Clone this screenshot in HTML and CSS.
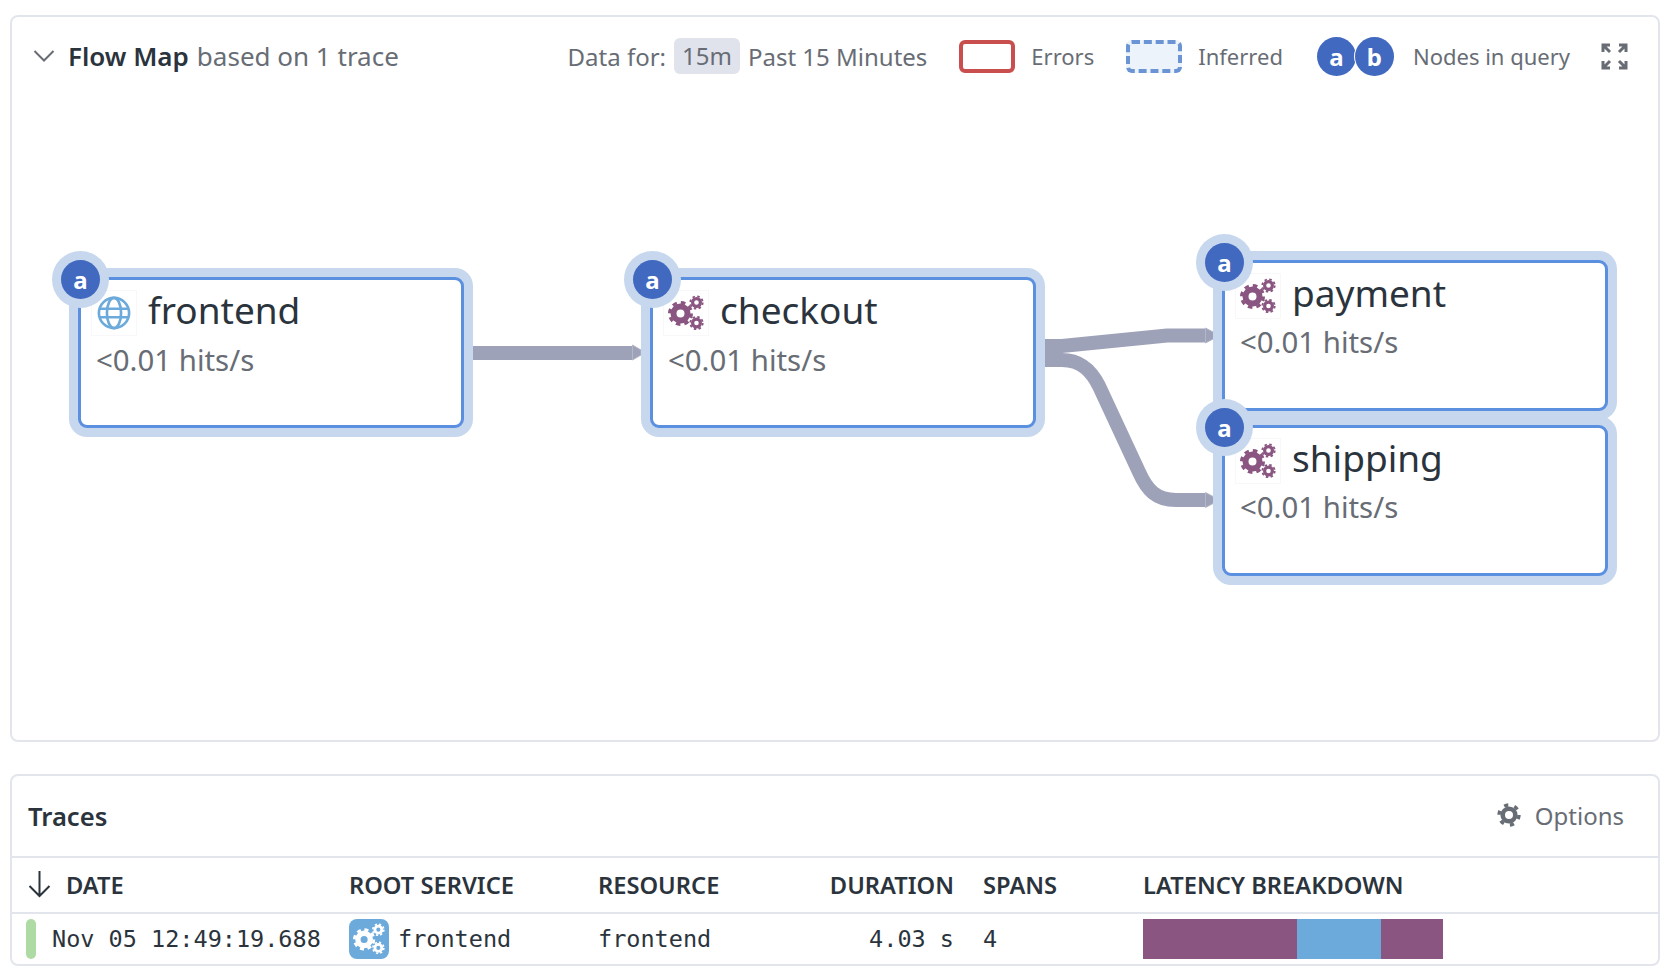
FILE: index.html
```html
<!DOCTYPE html>
<html lang="en">
<head>
    <meta charset="UTF-8">
    <title>Flow Map</title>
    <link rel="stylesheet" href="styles.css">
</head>
<body>
    <svg class="defs" width="0" height="0">
        <symbol id="gears" viewBox="0 0 36 36">
            <g fill="none" stroke="currentColor">
                <circle cx="12.500" cy="18.500" r="7" stroke-width="6"/>
                <circle cx="12.500" cy="18.500" r="11" stroke-width="3" stroke-dasharray="4.600 4.040"/>
                <circle cx="28.500" cy="7.500" r="3.900" stroke-width="3.200"/>
                <circle cx="28.500" cy="7.500" r="6.200" stroke-width="1.800" stroke-dasharray="2.500 2.370"/>
                <circle cx="28.500" cy="28" r="3.900" stroke-width="3.200"/>
                <circle cx="28.500" cy="28" r="6.200" stroke-width="1.800" stroke-dasharray="2.500 2.370"/>
            </g>
        </symbol>
    </svg>

    <!-- flow map -->
    <section class="panel flow-panel">
        <header class="flow-head">
            <div class="flow-title">
                <svg class="chevron" width="22" height="14" viewBox="0 0 22 14"><path d="M1.500 2 11 11.500 20.500 2" fill="none" stroke="#686d75" stroke-width="2"/></svg>
                <strong>Flow Map</strong>
                <span>based on 1 trace</span>
            </div>
            <div class="legend">
                <div class="legend-time">
                    <span>Data for:</span>
                    <span class="pill">15m</span>
                    <span>Past 15 Minutes</span>
                </div>
                <div class="legend-item"><i class="swatch swatch-error"></i>Errors</div>
                <div class="legend-item legend-inferred"><i class="swatch swatch-inferred"></i>Inferred</div>
                <div class="legend-item legend-nodes">
                    <span class="legend-badges"><b class="badge">a</b><b class="badge badge-b">b</b></span>
                    Nodes in query
                </div>
                <svg class="expand" width="27" height="27" viewBox="0 0 27 27">
                    <g fill="none" stroke="#686d75" stroke-width="3">
                        <path d="M2 9V2H9M2 2l7 7"/>
                        <path d="M25 9V2H18M25 2l-7 7"/>
                        <path d="M2 18v7H9M2 25l7-7"/>
                        <path d="M25 18v7H18M25 25l-7-7"/>
                    </g>
                </svg>
            </div>
        </header>

        <div class="graph">
            <!-- viewBox is in page coordinates, same offset as the graph box -->
            <svg class="edges" viewBox="12 97 1646 642" width="1646" height="642">
                <g fill="none" stroke="#9ea2b8" stroke-width="14">
                    <path d="M473 353H632"/>
                    <path d="M1045 346H1062L1167 335.500H1205"/>
                    <path d="M1045 360H1062C1082 360 1092 372 1099 386L1139 472C1147 490 1156 500 1176 500H1205"/>
                </g>
                <g fill="#9ea2b8" stroke="#b4b7c9" stroke-width="1">
                    <path d="M632.500 345 641 350V355L632.500 360Z"/>
                    <path d="M1205.500 328 1215 333V338L1205.500 343Z"/>
                    <path d="M1205.500 492.500 1215 497.500V502.500L1205.500 507.500Z"/>
                </g>
            </svg>

            <div class="node node-frontend">
                <b class="badge node-badge">a</b>
                <div class="node-head">
                    <span class="node-icon globe">
                        <svg width="34" height="34" viewBox="0 0 36 36" fill="none" stroke="currentColor" stroke-width="2.800">
                            <circle cx="18" cy="18" r="16"/>
                            <ellipse cx="18" cy="18" rx="7.500" ry="16"/>
                            <path d="M3 13.500H33M3 22.500H33"/>
                        </svg>
                    </span>
                    <span class="node-name">frontend</span>
                </div>
                <div class="node-hits">&lt;0.01 hits/s</div>
            </div>

            <div class="node node-checkout">
                <b class="badge node-badge">a</b>
                <div class="node-head">
                    <span class="node-icon"><svg width="36" height="36"><use href="#gears"/></svg></span>
                    <span class="node-name">checkout</span>
                </div>
                <div class="node-hits">&lt;0.01 hits/s</div>
            </div>

            <div class="node node-payment">
                <b class="badge node-badge">a</b>
                <div class="node-head">
                    <span class="node-icon"><svg width="36" height="36"><use href="#gears"/></svg></span>
                    <span class="node-name">payment</span>
                </div>
                <div class="node-hits">&lt;0.01 hits/s</div>
            </div>

            <div class="node node-shipping">
                <b class="badge node-badge">a</b>
                <div class="node-head">
                    <span class="node-icon"><svg width="36" height="36"><use href="#gears"/></svg></span>
                    <span class="node-name">shipping</span>
                </div>
                <div class="node-hits">&lt;0.01 hits/s</div>
            </div>
        </div>
    </section>

    <!-- traces table -->
    <section class="panel traces-panel">
        <header class="traces-head">
            <h2>Traces</h2>
            <div class="options">
                <svg width="24" height="24" viewBox="0 0 24 24" fill="none" stroke="#686d75">
                    <circle cx="12" cy="12" r="6.300" stroke-width="4.600"/>
                    <circle cx="12" cy="12" r="10" stroke-width="3.400" stroke-dasharray="4.200 6.270"/>
                </svg>
                Options
            </div>
        </header>
        <div class="row row-columns">
            <div class="cell cell-date">
                <svg width="23" height="27" viewBox="0 0 23 27"><path d="M11.500 0V25M1.500 15 11.500 25 21.500 15" fill="none" stroke="#2b343d" stroke-width="2"/></svg>
                DATE
            </div>
            <div class="cell">ROOT SERVICE</div>
            <div class="cell">RESOURCE</div>
            <div class="cell cell-right">DURATION</div>
            <div class="cell cell-spans">SPANS</div>
            <div class="cell">LATENCY BREAKDOWN</div>
        </div>
        <div class="row row-trace">
            <div class="cell cell-time"><i class="status"></i>Nov 05 12:49:19.688</div>
            <div class="cell cell-service">
                <span class="service-icon"><svg width="32" height="32"><use href="#gears"/></svg></span>
                frontend
            </div>
            <div class="cell">frontend</div>
            <div class="cell cell-right">4.03 s</div>
            <div class="cell cell-spans">4</div>
            <div class="cell latency">
                <i class="seg seg-purple" style="width: 154px"></i>
                <i class="seg seg-blue" style="width: 84px"></i>
                <i class="seg seg-purple" style="width: 62px"></i>
            </div>
        </div>
    </section>
</body>
</html>
```

FILE: styles.css
```css
* {
    box-sizing: border-box;
}

body {
    margin: 0;
    padding: 15px 14px 0 10px;
    background-color: #fff;
    font-family: "Noto Sans", sans-serif;
    color: #2b343d;
    overflow: hidden;
}

.defs {
    position: absolute;
}

.panel {
    border: 2px solid #e2e6ec;
    border-radius: 8px;
    background-color: #fff;
}

/* flow map */
.flow-panel {
    height: 727px;
}

.flow-head {
    display: flex;
    justify-content: space-between;
    align-items: center;
    height: 80px;
    padding: 0 30px 2px 21px;
}

.flow-title {
    display: flex;
    align-items: center;
    font-size: 26px;
    color: #686d75;
}

.flow-title strong {
    margin: 0 8px 0 13px;
    font-weight: 600;
    color: #2b343d;
}

.legend {
    display: flex;
    align-items: center;
    font-size: 22px;
    color: #686d75;
}

.legend-time {
    display: flex;
    align-items: center;
    gap: 8px;
    margin-right: 32px;
    font-size: 24px;
}

.pill {
    padding: 0 8px;
    line-height: 36px;
    border-radius: 6px;
    background-color: #e0e3ec;
}

.legend-item {
    display: flex;
    align-items: center;
    margin-right: 32px;
}

.legend-inferred {
    margin-right: 34px;
}

.legend-nodes {
    margin-right: 31px;
}

.swatch {
    width: 56px;
    height: 33px;
    margin-right: 16px;
    border-radius: 6px;
}

.swatch-error {
    border: 4px solid #c94f4f;
}

.swatch-inferred {
    border: 4px dashed #6a94d4;
    background-color: #edf3fb;
}

.legend-badges {
    display: flex;
    margin-right: 19px;
}

.badge {
    display: flex;
    align-items: center;
    justify-content: center;
    width: 39px;
    height: 39px;
    border-radius: 50%;
    background-color: #4169bf;
    color: #fff;
    font-size: 24px;
    font-weight: 700;
}

.badge-b {
    margin-left: -1px;
    box-shadow: -1px 0 0 #fff;
}

.expand {
    display: block;
}

/* graph */
.graph {
    position: relative;
    height: 642px;
}

.edges {
    position: absolute;
    left: 0;
    top: 0;
}

.node {
    position: absolute;
    width: 386px;
    height: 151px;
    padding: 11px;
    border: 3px solid #5b8fe0;
    border-radius: 9px;
    background-color: #fff;
    box-shadow: 0 0 0 9px #c6d7ee;
}

.node-frontend {
    left: 66px;
    top: 180px;
}

.node-checkout {
    left: 638px;
    top: 180px;
}

.node-payment {
    left: 1210px;
    top: 163px;
}

.node-shipping {
    left: 1210px;
    top: 328px;
}

.node-badge {
    position: absolute;
    left: -20px;
    top: -20px;
    box-shadow: 0 0 0 9px #c6d7ee;
}

.node-head {
    display: flex;
    align-items: center;
    gap: 12px;
    height: 44px;
}

.node-icon {
    display: flex;
    align-items: center;
    justify-content: center;
    width: 44px;
    height: 44px;
    color: #8a5580;
    box-shadow: 0 0 0 1px #f8f8fa;
}

.globe {
    color: #6caadb;
}

.node-name {
    padding-bottom: 6px;
    font-size: 37px;
    line-height: 38px;
}

.node-hits {
    margin: 5px 0 0 4px;
    font-size: 29.4px;
    line-height: 40px;
    color: #686d75;
}

.node-payment .node-hits,
.node-shipping .node-hits {
    margin-top: 4px;
}

/* traces */
.traces-panel {
    height: 192px;
    margin-top: 32px;
}

.traces-head {
    display: flex;
    justify-content: space-between;
    align-items: center;
    height: 82px;
    padding: 0 34px 0 16px;
    border-bottom: 2px solid #e2e6ec;
}

.traces-head h2 {
    margin: 0;
    font-size: 25.6px;
    font-weight: 600;
}

.options {
    display: flex;
    align-items: center;
    gap: 14px;
    padding-bottom: 2px;
    font-size: 24px;
    color: #686d75;
}

.row {
    display: grid;
    grid-template-columns: 337px 249px 232px 124px 189px 1fr;
    align-items: center;
}

.row-columns {
    height: 56px;
    padding-bottom: 1px;
    border-bottom: 2px solid #e2e6ec;
    font-size: 23.7px;
    font-weight: 600;
}

.row-trace {
    height: 50px;
    font-family: "DejaVu Sans Mono", monospace;
    font-size: 23.5px;
}

.cell {
    display: flex;
    align-items: center;
    white-space: nowrap;
}

.cell-date {
    gap: 15px;
    padding-left: 16px;
}

.cell-right {
    justify-content: flex-end;
}

.cell-spans {
    padding-left: 29px;
}

.cell-time {
    gap: 16px;
    padding-left: 14px;
}

.status {
    width: 10px;
    height: 40px;
    border-radius: 5px;
    background-color: #aedba3;
}

.cell-service {
    gap: 9px;
}

.service-icon {
    display: flex;
    align-items: center;
    justify-content: center;
    width: 40px;
    height: 40px;
    border-radius: 8px;
    background-color: #6caadb;
    color: #fff;
}

.latency {
    height: 40px;
}

.seg {
    height: 40px;
}

.seg-purple {
    background-color: #8a5580;
}

.seg-blue {
    background-color: #6caadb;
}
```
